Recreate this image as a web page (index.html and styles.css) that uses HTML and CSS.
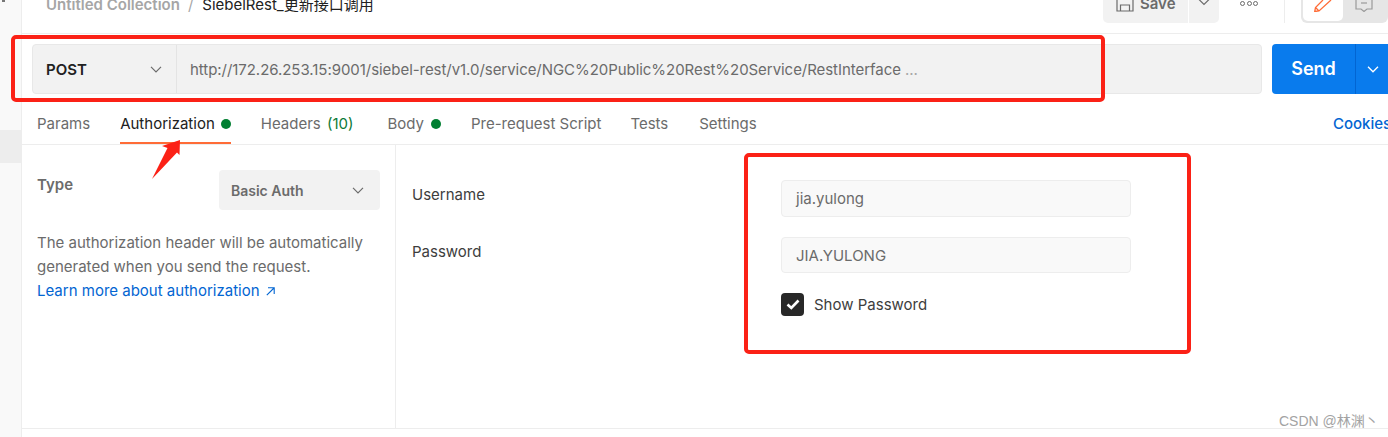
FILE: index.html
```html
<!DOCTYPE html>
<html lang="en">
<head>
<meta charset="utf-8">
<title>SiebelRest</title>
<link rel="stylesheet" href="styles.css">
</head>
<body>
<div class="app">
  <aside class="sidebar"><div class="side-dot"></div><div class="side-item"></div></aside>
  <main class="main">
    <header class="topbar">
      <div class="crumbs"><span class="crumb-muted">Untitled Collection</span><span class="crumb-sep">/</span><span class="crumb-name">SiebelRest_更新接口调用</span></div>
      <div class="top-actions">
        <div class="save-btn">
          <svg class="save-icon" width="18" height="18" viewBox="0 0 18 18" fill="none" stroke="#6b6b6b" stroke-width="1.2"><path d="M1 1h12l4 4v12H1z"/><path d="M4.500 17v-6h9v6"/></svg>
          <span>Save</span>
        </div>
        <div class="save-caret"><svg width="12" height="7" viewBox="0 0 12 7" fill="none" stroke="#6b6b6b" stroke-width="1.2"><path d="M1 .5l5 5 5-5"/></svg></div>
        <div class="dots"><i></i><i></i><i></i></div>
        <div class="divider"></div>
        <div class="mode">
          <div class="mode-on"><svg width="18" height="12" viewBox="0 0 18 12" fill="none" stroke="#ff6c37" stroke-width="1.3"><path d="M9 0L1.500 7.500L.7 11.500L5 11L17 0M1.500 7.500L5 11"/></svg></div>
          <div class="mode-off"><svg width="18" height="18" viewBox="0 0 18 18" fill="none" stroke="#9a9a9a" stroke-width="1.2"><path d="M1 0h16v15h-5l-3 2.500-3-2.500H1z"/><path d="M6 9h6"/></svg></div>
        </div>
      </div>
    </header>
    <section class="url-row">
      <div class="url-box">
        <div class="method"><span>POST</span><svg class="chev" width="12" height="7" viewBox="0 0 12 7" fill="none" stroke="#6b6b6b" stroke-width="1.2"><path d="M1 .8l5 5 5-5"/></svg></div>
        <div class="url-text">http://172.26.253.15:9001/siebel-rest/v1.0/service/NGC%20Public%20Rest%20Service/RestInterface <span class="url-more">...</span></div>
      </div>
      <div class="send">
        <span class="send-label">Send</span>
        <span class="send-caret"><svg width="12" height="7" viewBox="0 0 12 7" fill="none" stroke="#fff" stroke-width="1.3"><path d="M1 .8l5 5 5-5"/></svg></span>
      </div>
    </section>
    <nav class="tabs">
      <span class="tab">Params</span>
      <span class="tab tab-active">Authorization<i class="dot"></i></span>
      <span class="tab tab-headers">Headers <em>(10)</em></span>
      <span class="tab tab-body">Body<i class="dot"></i></span>
      <span class="tab tab-pre">Pre-request Script</span>
      <span class="tab tab-tests">Tests</span>
      <span class="tab">Settings</span>
      <span class="cookies">Cookies</span>
    </nav>
    <section class="auth">
      <div class="auth-left">
        <div class="type-row">
          <span class="type-label">Type</span>
          <div class="type-select"><span>Basic Auth</span><svg width="12" height="7" viewBox="0 0 12 7" fill="none" stroke="#6b6b6b" stroke-width="1.2"><path d="M1 .8l5 5 5-5"/></svg></div>
        </div>
        <p class="auth-help">The authorization header will be automatically generated when you send the request.</p>
        <a class="auth-link">Learn more about authorization <svg class="ext" width="9" height="9" viewBox="0 0 9 9" fill="none" stroke="#0265d2" stroke-width="1.1"><path d="M.8 8.200L8 1M2 .8h6.200V7"/></svg></a>
      </div>
      <div class="auth-right">
        <div class="labels"><div class="field-label">Username</div><div class="field-label">Password</div></div>
        <div class="fields">
          <div class="input">jia.yulong</div>
          <div class="input input-second">JIA.YULONG</div>
          <div class="show-row">
            <span class="check"><svg width="14" height="11" viewBox="0 0 14 11" fill="none" stroke="#fff" stroke-width="2.6"><path d="M1.500 5.500l3.800 3.500L12.500 1.500"/></svg></span>
            <span class="show-label">Show Password</span>
          </div>
        </div>
      </div>
    </section>
  </main>
  <div class="red-box red-url"></div>
  <div class="red-box red-fields"></div>
  <svg class="arrow" width="32" height="40" viewBox="0 0 32 40"><path d="M28 0L27.500 15L25 12.500L0 39L15.500 8L10 6z" fill="#fb2116"/></svg>
  <div class="watermark">CSDN @林渊丶</div>
</div>
</body>
</html>
```
FILE: styles.css
```css
* { box-sizing: border-box; }
html, body { margin: 0; padding: 0; background: #fff; }
body { font-family: Inter, "Noto Sans CJK SC", sans-serif; font-size: 15px; color: #6b6b6b; }
.app { position: relative; display: flex; width: 1388px; height: 437px; overflow: hidden; }
.sidebar { width: 22px; flex: none; background: #f9f9f9; border-right: 1px solid #ededed; display: flex; flex-direction: column; }
.side-dot { width: 3px; height: 2px; margin: 0 0 0 2px; background: #777; }
.side-item { width: 21px; height: 33px; margin-top: 128px; background: #ededed; }
.main { flex: 1; min-width: 0; display: flex; flex-direction: column; }
.topbar { height: 34px; flex: none; border-bottom: 1px solid #ededed; display: flex; justify-content: space-between; align-items: flex-end; padding: 0 0 10px 24px; }
.crumbs { display: flex; gap: 8px; line-height: 20px; margin-bottom: 8px; font-weight: 400; }
.crumb-muted { color: #a6a6a6; font-weight: 600; }
.crumb-sep { color: #a6a6a6; }
.crumb-name { color: #212121; margin-left: 1px; }
.top-actions { display: flex; align-items: flex-end; height: 23px; }
.save-btn { width: 85px; height: 33px; flex: none; background: #f2f2f2; border-radius: 0 0 0 5px; display: flex; align-items: center; gap: 6px; padding: 0 0 7px 13px; font-weight: 600; color: #6b6b6b; }
.save-caret { width: 30px; height: 33px; flex: none; margin-left: 1px; background: #f2f2f2; border-radius: 0 0 5px 0; display: flex; justify-content: center; padding-top: 9px; }
.dots { display: flex; gap: 1.5px; width: 18px; flex: none; margin: 0 0 17px 21px; }
.dots i { width: 5px; height: 5px; border: 1px solid #6b6b6b; border-radius: 50%; flex: none; }
.divider { width: 1px; height: 23px; flex: none; background: #ededed; margin: 0 0 0 26px; }
.mode { display: flex; width: 87px; height: 23px; flex: none; margin: 0 0 0 16px; background: #e6e6e6; border-radius: 0 0 6px 6px; padding: 0 0 2px 2px; overflow: hidden; }
.mode-on { width: 40px; background: #fff; border-radius: 0 0 5px 5px; display: flex; align-items: flex-end; justify-content: center; overflow: hidden; padding-bottom: 9px; }
.mode-off { padding: 0 0 9px 12px; display: flex; align-items: flex-end; }
.url-row { flex: none; display: flex; padding: 10px 0 0 10px; height: 60px; }
.url-box { width: 1230px; height: 50px; background: #f2f2f2; border: 1px solid #e8e8e8; border-radius: 4px; display: flex; align-items: center; }
.method { width: 144px; height: 48px; flex: none; border-right: 1px solid #e4e4e4; display: flex; align-items: center; justify-content: space-between; padding: 0 14px 0 13px; font-weight: 600; color: #212121; }
.url-text { padding-left: 13px; color: #6b6b6b; white-space: nowrap; letter-spacing: -.05px; }
.url-more { color: #a6a6a6; }
.send { width: 116px; height: 50px; margin-left: 10px; flex: none; background: #097bed; border-radius: 4px 0 0 4px; color: #fff; display: flex; align-items: center; }
.send-label { width: 84px; text-align: center; font-size: 18px; font-weight: 600; border-right: 1px solid #0265d2; height: 50px; line-height: 50px; }
.send-caret { padding-left: 11px; display: flex; }
.tabs { flex: none; height: 51px; border-bottom: 1px solid #ededed; display: flex; align-items: stretch; padding-left: 15px; line-height: 60px; }
.tab { display: flex; align-items: flex-start; height: 50px; color: #6b6b6b; margin-right: 30px; white-space: pre; }
.tab-active { color: #212121; border-bottom: 2px solid #ff6c37; }
.tab-headers { margin-right: 34px; }
.tab-headers em { font-style: normal; color: #0c7a38; margin-left: 2px; }
.dot { width: 10px; height: 10px; border-radius: 50%; background: #007f31; margin: 25px 0 0 6px; }
.tab-body .dot { margin-left: 7px; }
.tab-pre { margin-right: 29px; }
.tab-tests { margin-right: 31px; }
.cookies { margin-left: auto; color: #0265d2; font-weight: 500; width: 55px; white-space: nowrap; }
.auth { flex: 1; display: flex; min-height: 0; margin-bottom: 8px; border-bottom: 1px solid #ededed; }
.auth-left { width: 374px; flex: none; border-right: 1px solid #ededed; padding: 25px 15px 0 15px; }
.type-row { display: flex; justify-content: space-between; align-items: flex-start; }
.type-label { font-weight: 600; line-height: 30px; }
.type-select { width: 161px; height: 40px; background: #f2f2f2; border-radius: 4px; display: flex; align-items: center; justify-content: space-between; padding: 0 16px 0 12px; font-weight: 600; font-size: 14px; }
.auth-help { margin: 21px 0 0; line-height: 24px; width: 345px; }
.auth-link { display: block; color: #0265d2; line-height: 24px; white-space: nowrap; }
.ext { margin-left: 2px; }
.auth-right { flex: 1; display: flex; padding: 35px 0 0 16px; }
.labels { width: 369px; flex: none; }
.field-label { line-height: 30px; height: 57px; color: #3d3d3d; }
.fields { width: 350px; display: flex; flex-direction: column; }
.input { height: 37px; background: #f9f9f9; border: 1px solid #ededed; border-radius: 4px; padding: 0 14px; line-height: 35px; color: #6b6b6b; }
.input-second { margin-top: 20px; height: 36px; }
.show-row { display: flex; align-items: center; margin-top: 20px; gap: 10px; }
.check { width: 23px; height: 23px; background: #282828; border-radius: 4px; display: flex; align-items: center; justify-content: center; }
.show-label { color: #3d3d3d; }
.red-box { position: absolute; border: 4px solid #fb2116; border-radius: 5px; pointer-events: none; }
.red-url { left: 11px; top: 35px; width: 1094px; height: 67px; }
.red-fields { left: 744px; top: 153px; width: 447px; height: 201px; }
.arrow { position: absolute; left: 152px; top: 140px; }
.watermark { position: absolute; left: 1279px; top: 412px; font-family: "Liberation Sans", "Noto Sans CJK SC", sans-serif; font-size: 14px; line-height: 18px; color: #a3a3a3; white-space: nowrap; }
```
